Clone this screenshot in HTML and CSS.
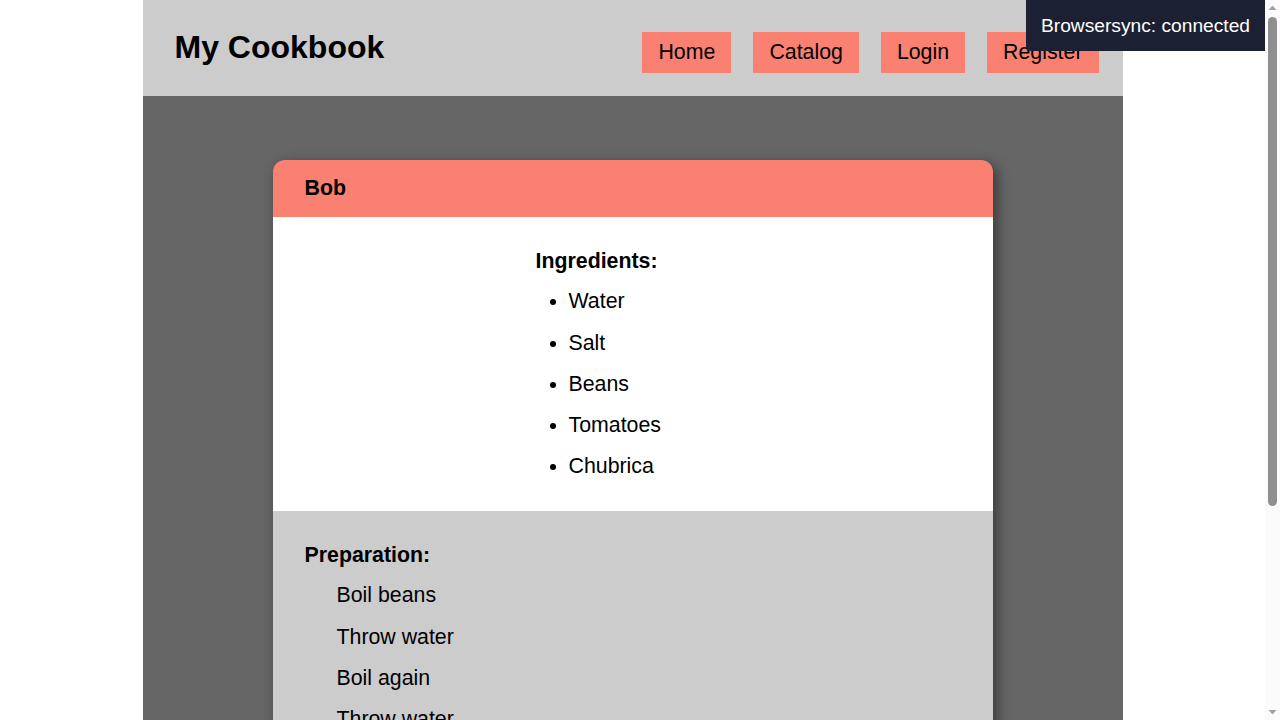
FILE: index.html
```html
<!DOCTYPE html>
<html lang="en">
<head>
<meta charset="utf-8">
<title>My Cookbook</title>
<link rel="stylesheet" href="styles.css">
</head>
<body>
<div class="page">
  <header class="site-header">
    <h1 class="logo">My Cookbook</h1>
    <nav class="nav">
      <a class="nav-btn" href="#">Home</a>
      <a class="nav-btn" href="#">Catalog</a>
      <a class="nav-btn" href="#">Login</a>
      <a class="nav-btn" href="#">Register</a>
    </nav>
  </header>
  <main class="main">
    <article class="recipe">
      <div class="recipe-head">Bob</div>
      <section class="ingredients">
        <div class="ingredients-inner">
          <h3 class="section-title">Ingredients:</h3>
          <ul class="ing-list">
            <li>Water</li>
            <li>Salt</li>
            <li>Beans</li>
            <li>Tomatoes</li>
            <li>Chubrica</li>
          </ul>
        </div>
      </section>
      <section class="preparation">
        <h3 class="section-title">Preparation:</h3>
        <ul class="prep-list">
          <li>Boil beans</li>
          <li>Throw water</li>
          <li>Boil again</li>
          <li>Throw water</li>
        </ul>
      </section>
    </article>
  </main>
</div>
<div class="bs-notify">Browsersync: connected</div>
<div class="fake-scrollbar" aria-hidden="true">
  <svg class="sb-arrow" width="15" height="15" viewBox="0 0 15 15"><path d="M3.5 10 L7.5 5.5 L11.5 10 Z" fill="#a3a3a3"/></svg>
  <div class="sb-track"><div class="sb-thumb"></div></div>
  <svg class="sb-arrow" width="15" height="15" viewBox="0 0 15 15"><path d="M3.5 5 L7.5 9.5 L11.5 5 Z" fill="#a3a3a3"/></svg>
</div>
</body>
</html>
```
FILE: styles.css
```css
html, body {
  margin: 0;
  padding: 0;
  background: #fff;
  font-family: "Liberation Sans", Arial, sans-serif;
  color: #000;
}

body {
  padding-right: 15px;
}

.page {
  width: 980px;
  margin: 0 auto;
}

.site-header {
  height: 96px;
  box-sizing: border-box;
  background: #ccc;
  padding: 0 24px 0 32px;
  display: flex;
  align-items: center;
  justify-content: space-between;
}

.logo {
  margin: 0 0 2px;
  font-size: 32px;
  line-height: 37px;
  font-weight: bold;
}

.nav {
  display: flex;
  gap: 22px;
  margin-top: 9px;
}

.nav-btn {
  display: block;
  background: #fa8072;
  color: #000;
  text-decoration: none;
  font-size: 21.33px;
  line-height: 25px;
  padding: 8px 16px;
}

.main {
  background: #666;
  padding: 64px 0;
  min-height: 908px;
  box-sizing: border-box;
}

.recipe {
  width: 720px;
  margin: 0 auto;
  border-radius: 12px 12px 0 0;
  box-shadow: 4px 4px 14px rgba(0, 0, 0, 0.45);
  font-size: 21.33px;
  line-height: 24.25px;
}

.recipe-head {
  background: #fa8072;
  border-radius: 12px 12px 0 0;
  padding: 16px 32px;
  line-height: 25px;
  font-weight: bold;
}

.ingredients {
  background: #fff;
  padding: 32px;
  display: flex;
  justify-content: center;
}

.ingredients-inner {
  width: 194px;
}

.section-title {
  margin: 0;
  font-size: 21.33px;
  line-height: 24.25px;
  font-weight: bold;
}

.ing-list {
  margin: 16px 0 0;
  padding-left: 33px;
}

.ing-list li + li,
.prep-list li + li {
  margin-top: 17px;
}

.preparation {
  background: #ccc;
  padding: 32px;
}

.prep-list {
  list-style: none;
  margin: 16.5px 0 0;
  padding-left: 32px;
}

.bs-notify {
  position: fixed;
  top: 0;
  right: 15px;
  background: rgb(27, 32, 50);
  color: #fff;
  padding: 15px;
  font-size: 19.2px;
  line-height: 21px;
  border-bottom-left-radius: 5px;
  z-index: 9999;
}

.fake-scrollbar {
  position: fixed;
  top: 0;
  right: 0;
  width: 15px;
  height: 720px;
  background: #fbfbfb;
  display: flex;
  flex-direction: column;
  z-index: 10000;
}

.sb-arrow {
  display: block;
  flex: none;
}

.sb-track {
  flex: 1;
  padding: 2px 3px 0;
}

.sb-thumb {
  width: 9px;
  height: 489px;
  border-radius: 5px;
  background: #8f8f8f;
}
```
